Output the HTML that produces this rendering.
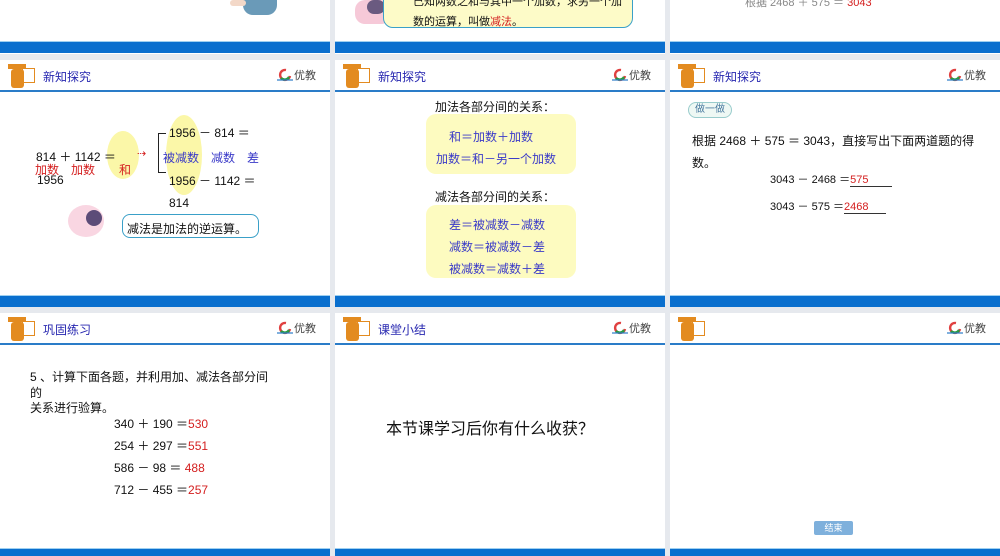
<!DOCTYPE html>
<html><head><meta charset="utf-8">
<style>
*{margin:0;padding:0;box-sizing:border-box}
body{width:1000px;height:556px;background:#e6e9ee;position:relative;overflow:hidden;font-family:"Liberation Sans","Noto Sans CJK SC",sans-serif;color:#111}
.s{position:absolute;background:#fff;overflow:hidden}
.a{position:absolute;white-space:nowrap}
.bar{position:absolute;left:0;right:0;height:12px;background:#0a6fce;border-top:1px solid #9fd0f0}
.hl{position:absolute;left:0;right:0;height:2px;background:#2a7cc8;top:30px}
.ttl{position:absolute;left:43px;top:8px;font-size:12px;color:#2727b0}
.logo{position:absolute;left:277px;top:7px;font-size:11px;color:#444;display:flex;align-items:center;gap:1px}
.red{color:#d42020}.blue{color:#3a3ac8}
</style></head><body>

<!-- top row -->
<div class="s" style="left:0;top:0;width:330px;height:54px">
 <div class="a" style="left:243px;top:0;width:34px;height:15px;background:#6a9ab8;border-radius:0 0 10px 10px"></div>
 <div class="a" style="left:230px;top:0;width:16px;height:6px;background:#f3d8c8;border-radius:4px"></div>
 <div class="bar" style="top:41px"></div>
</div>
<div class="s" style="left:335px;top:0;width:330px;height:54px">
 <div class="a" style="left:20px;top:0;width:36px;height:24px;background:#f6c9d8;border-radius:10px"></div>
 <div class="a" style="left:32px;top:0;width:18px;height:14px;background:#6a5a80;border-radius:8px"></div>
 <div class="a" style="left:48px;top:-10px;width:250px;height:38px;background:#fdfbc8;border:1.5px solid #3aa0c8;border-radius:10px"></div>
 <div class="a" style="left:78px;top:-7px;font-size:11px">已知两数之和与其中一个加数，求另一个加</div>
 <div class="a" style="left:78px;top:13px;font-size:11px">数的运算，叫做<span class="red">减法</span>。</div>
 <div class="bar" style="top:41px"></div>
</div>
<div class="s" style="left:670px;top:0;width:330px;height:54px">
 <div class="a" style="left:75px;top:-6px;font-size:11px;color:#888">根据 2468 ＋ 575 ＝ <span class="red">3043</span></div>
 <div class="bar" style="top:41px"></div>
</div>

<!-- row 2 -->
<div class="s" style="left:0;top:60px;width:330px;height:247px">
 <div class="a" style="left:8px;top:3px;width:27px;height:27px">
  <div class="a" style="left:0;top:1px;width:18px;height:5px;background:#e38b20"></div>
  <div class="a" style="left:3px;top:6px;width:13px;height:19px;background:#e38b20;border-radius:3px"></div>
  <div class="a" style="left:14px;top:5px;width:13px;height:15px;border:1.5px solid #e38b20"></div>
 </div>
 <div class="ttl">新知探究</div><div class="logo"><svg width="16" height="14" viewBox="0 0 16 14"><path d="M9 2a5 5 0 1 0 4 6" fill="none" stroke="#e04040" stroke-width="2.4"/><path d="M4 10a5 5 0 0 0 8-1" fill="none" stroke="#2a9a40" stroke-width="2.4"/><path d="M0 12h16" stroke="#2a7cc8" stroke-width="1.2"/></svg>优教</div>
 <div class="hl"></div>
 <div class="a" style="left:107px;top:71px;width:32px;height:48px;background:#fbf7a8;border-radius:50%"></div>
 <div class="a" style="left:166px;top:55px;width:36px;height:80px;background:#fbf7a8;border-radius:50%"></div>
 <div class="a" style="left:36px;top:88px;font-size:12px">814 ＋ 1142 ＝</div>
 <div class="a red" style="left:35px;top:101px;font-size:12px">加数　加数　　和</div>
 <div class="a" style="left:37px;top:113px;font-size:12px">1956</div>
 <div class="a red" style="left:137px;top:87px;font-size:11px">⇢</div>
 <div class="a" style="left:158px;top:73px;width:8px;height:40px;border:1.5px solid #222;border-right:none"></div>
 <div class="a" style="left:169px;top:64px;font-size:12px">1956 － 814 ＝</div>
 <div class="a blue" style="left:163px;top:89px;font-size:12px">被减数　减数　差</div>
 <div class="a" style="left:169px;top:112px;font-size:12px">1956 － 1142 ＝</div>
 <div class="a" style="left:169px;top:136px;font-size:12px">814</div>
 <div class="a" style="left:68px;top:145px;width:36px;height:32px;background:#f9d6e2;border-radius:50%"></div>
 <div class="a" style="left:86px;top:150px;width:16px;height:16px;background:#5c4c78;border-radius:50%"></div>
 <div class="a" style="left:122px;top:154px;width:137px;height:24px;border:1.5px solid #3aa0c8;border-radius:8px;background:#fff"></div>
 <div class="a" style="left:127px;top:160px;font-size:12px">减法是加法的逆运算。</div>
 <div class="bar" style="top:235px"></div>
</div>
<div class="s" style="left:335px;top:60px;width:330px;height:247px">
 <div class="a" style="left:8px;top:3px;width:27px;height:27px">
  <div class="a" style="left:0;top:1px;width:18px;height:5px;background:#e38b20"></div>
  <div class="a" style="left:3px;top:6px;width:13px;height:19px;background:#e38b20;border-radius:3px"></div>
  <div class="a" style="left:14px;top:5px;width:13px;height:15px;border:1.5px solid #e38b20"></div>
 </div>
 <div class="ttl">新知探究</div><div class="logo"><svg width="16" height="14" viewBox="0 0 16 14"><path d="M9 2a5 5 0 1 0 4 6" fill="none" stroke="#e04040" stroke-width="2.4"/><path d="M4 10a5 5 0 0 0 8-1" fill="none" stroke="#2a9a40" stroke-width="2.4"/><path d="M0 12h16" stroke="#2a7cc8" stroke-width="1.2"/></svg>优教</div>
 <div class="hl"></div>
 <div class="a" style="left:100px;top:38px;font-size:12px">加法各部分间的关系：</div>
 <div class="a" style="left:91px;top:54px;width:150px;height:60px;background:#fdfbc0;border-radius:10px"></div>
 <div class="a blue" style="left:114px;top:68px;font-size:12px">和＝加数＋加数</div>
 <div class="a blue" style="left:101px;top:90px;font-size:12px">加数＝和－另一个加数</div>
 <div class="a" style="left:100px;top:128px;font-size:12px">减法各部分间的关系：</div>
 <div class="a" style="left:91px;top:145px;width:150px;height:73px;background:#fdfbc0;border-radius:10px"></div>
 <div class="a blue" style="left:114px;top:156px;font-size:12px">差＝被减数－减数</div>
 <div class="a blue" style="left:114px;top:178px;font-size:12px">减数＝被减数－差</div>
 <div class="a blue" style="left:114px;top:200px;font-size:12px">被减数＝减数＋差</div>
 <div class="bar" style="top:235px"></div>
</div>
<div class="s" style="left:670px;top:60px;width:330px;height:247px">
 <div class="a" style="left:8px;top:3px;width:27px;height:27px">
  <div class="a" style="left:0;top:1px;width:18px;height:5px;background:#e38b20"></div>
  <div class="a" style="left:3px;top:6px;width:13px;height:19px;background:#e38b20;border-radius:3px"></div>
  <div class="a" style="left:14px;top:5px;width:13px;height:15px;border:1.5px solid #e38b20"></div>
 </div>
 <div class="ttl">新知探究</div><div class="logo"><svg width="16" height="14" viewBox="0 0 16 14"><path d="M9 2a5 5 0 1 0 4 6" fill="none" stroke="#e04040" stroke-width="2.4"/><path d="M4 10a5 5 0 0 0 8-1" fill="none" stroke="#2a9a40" stroke-width="2.4"/><path d="M0 12h16" stroke="#2a7cc8" stroke-width="1.2"/></svg>优教</div>
 <div class="hl"></div>
 <div class="a" style="left:18px;top:42px;width:44px;height:16px;border:1px solid #9cc;border-radius:8px;background:#eef8f4;font-size:10px;color:#4a7aa0;text-align:center;line-height:14px">做一做</div>
 <div class="a" style="left:22px;top:72px;font-size:12px">根据 2468 ＋ 575 ＝ 3043，直接写出下面两道题的得</div>
 <div class="a" style="left:22px;top:94px;font-size:12px">数。</div>
 <div class="a" style="left:100px;top:111px;font-size:11px">3043 － 2468 ＝<span class="red" style="display:inline-block;width:42px;border-bottom:1px solid #333">575</span></div>
 <div class="a" style="left:100px;top:138px;font-size:11px">3043 － 575 ＝<span class="red" style="display:inline-block;width:42px;border-bottom:1px solid #333">2468</span></div>
 <div class="bar" style="top:235px"></div>
</div>

<!-- row 3 -->
<div class="s" style="left:0;top:313px;width:330px;height:243px">
 <div class="a" style="left:8px;top:3px;width:27px;height:27px">
  <div class="a" style="left:0;top:1px;width:18px;height:5px;background:#e38b20"></div>
  <div class="a" style="left:3px;top:6px;width:13px;height:19px;background:#e38b20;border-radius:3px"></div>
  <div class="a" style="left:14px;top:5px;width:13px;height:15px;border:1.5px solid #e38b20"></div>
 </div>
 <div class="ttl">巩固练习</div><div class="logo"><svg width="16" height="14" viewBox="0 0 16 14"><path d="M9 2a5 5 0 1 0 4 6" fill="none" stroke="#e04040" stroke-width="2.4"/><path d="M4 10a5 5 0 0 0 8-1" fill="none" stroke="#2a9a40" stroke-width="2.4"/><path d="M0 12h16" stroke="#2a7cc8" stroke-width="1.2"/></svg>优教</div>
 <div class="hl"></div>
 <div class="a" style="left:30px;top:55px;font-size:12px">5 、计算下面各题，并利用加、减法各部分间</div>
 <div class="a" style="left:30px;top:71px;font-size:12px">的</div>
 <div class="a" style="left:30px;top:86px;font-size:12px">关系进行验算。</div>
 <div class="a" style="left:114px;top:102px;font-size:12px">340 ＋ 190 ＝<span class="red">530</span></div>
 <div class="a" style="left:114px;top:124px;font-size:12px">254 ＋ 297 ＝<span class="red">551</span></div>
 <div class="a" style="left:114px;top:146px;font-size:12px">586 － 98 ＝ <span class="red">488</span></div>
 <div class="a" style="left:114px;top:168px;font-size:12px">712 － 455 ＝<span class="red">257</span></div>
 <div class="bar" style="top:235px"></div>
</div>
<div class="s" style="left:335px;top:313px;width:330px;height:243px">
 <div class="a" style="left:8px;top:3px;width:27px;height:27px">
  <div class="a" style="left:0;top:1px;width:18px;height:5px;background:#e38b20"></div>
  <div class="a" style="left:3px;top:6px;width:13px;height:19px;background:#e38b20;border-radius:3px"></div>
  <div class="a" style="left:14px;top:5px;width:13px;height:15px;border:1.5px solid #e38b20"></div>
 </div>
 <div class="ttl">课堂小结</div><div class="logo"><svg width="16" height="14" viewBox="0 0 16 14"><path d="M9 2a5 5 0 1 0 4 6" fill="none" stroke="#e04040" stroke-width="2.4"/><path d="M4 10a5 5 0 0 0 8-1" fill="none" stroke="#2a9a40" stroke-width="2.4"/><path d="M0 12h16" stroke="#2a7cc8" stroke-width="1.2"/></svg>优教</div>
 <div class="hl"></div>
 <div class="a" style="left:51px;top:102px;font-size:16px">本节课学习后你有什么收获？</div>
 <div class="bar" style="top:235px"></div>
</div>
<div class="s" style="left:670px;top:313px;width:330px;height:243px">
 <div class="a" style="left:8px;top:3px;width:27px;height:27px">
  <div class="a" style="left:0;top:1px;width:18px;height:5px;background:#e38b20"></div>
  <div class="a" style="left:3px;top:6px;width:13px;height:19px;background:#e38b20;border-radius:3px"></div>
  <div class="a" style="left:14px;top:5px;width:13px;height:15px;border:1.5px solid #e38b20"></div>
 </div>
 <div class="logo"><svg width="16" height="14" viewBox="0 0 16 14"><path d="M9 2a5 5 0 1 0 4 6" fill="none" stroke="#e04040" stroke-width="2.4"/><path d="M4 10a5 5 0 0 0 8-1" fill="none" stroke="#2a9a40" stroke-width="2.4"/><path d="M0 12h16" stroke="#2a7cc8" stroke-width="1.2"/></svg>优教</div>
 <div class="hl"></div>
 <div class="a" style="left:144px;top:208px;width:39px;height:14px;background:#7eb0dc;border-radius:2px;font-size:9px;color:#fff;text-align:center;line-height:14px">结束</div>
 <div class="bar" style="top:235px"></div>
</div>
</body></html>
